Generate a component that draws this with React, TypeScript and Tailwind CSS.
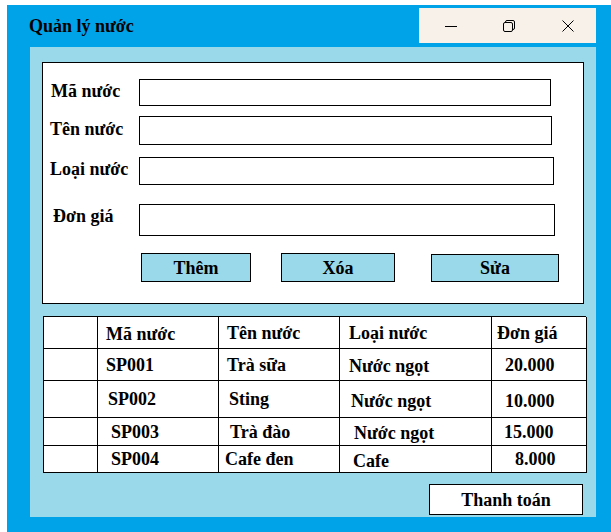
import React from "react";

const serif = { fontFamily: '"Liberation Serif", "Times New Roman", serif' };

function Field({ label, w, h, labelCls, rowCls }: { label: string; w: string; h: string; labelCls: string; rowCls: string }) {
  return (
    <div className={`flex items-center ${rowCls}`}>
      <div className={`w-[96px] shrink-0 text-[18px] leading-[20px] font-bold text-black whitespace-nowrap ${labelCls}`}>{label}</div>
      <div className={`bg-white border border-black ${w} ${h}`} />
    </div>
  );
}

export default function App() {
  const cell = "bg-white border-r border-b border-black flex items-center text-[18px] leading-[20px] font-bold text-black whitespace-nowrap";
  return (
    <div className="w-[611px] h-[532px] bg-white pl-[7px] pt-[5px] overflow-hidden" style={serif}>
      <div className="w-[604px] h-[527px] bg-[#00A2E8] flex flex-col">
        {/* Title bar */}
        <div className="h-[42px] flex items-start shrink-0">
          <div className="ml-[22px] mt-[10px] text-[18px] font-bold text-black leading-[22px]">Quản lý nước</div>
          <div className="ml-auto mr-[15px] mt-[3px] w-[177px] h-[35px] bg-[#F8F1EA] flex items-center">
            <svg className="ml-[26px]" width="12" height="12" viewBox="0 0 12 12">
              <path d="M0 6.5H12" stroke="#000" strokeWidth="1" />
            </svg>
            <svg className="ml-[46px]" width="12" height="12" viewBox="0 0 12 12">
              <rect x="0.5" y="2.5" width="9" height="9" rx="1.5" fill="none" stroke="#000" strokeWidth="1" />
              <path d="M2.5 2.5V2A1.5 1.5 0 0 1 4 0.5H10A1.5 1.5 0 0 1 11.5 2V8A1.5 1.5 0 0 1 10 9.5H9.5" fill="none" stroke="#000" strokeWidth="1" />
            </svg>
            <svg className="ml-[47px]" width="12" height="12" viewBox="0 0 12 12">
              <path d="M0.5 0.5L11.5 11.5M11.5 0.5L0.5 11.5" stroke="#000" strokeWidth="1" />
            </svg>
          </div>
        </div>
        {/* Content */}
        <div className="ml-[23px] w-[566px] h-[470px] bg-[#99D9EA] flex flex-col">
          <div className="ml-[12px] mt-[15px] w-[542px] h-[242px] bg-white border border-black flex flex-col">
            <Field label="Mã nước" w="w-[412px]" h="h-[27px]" rowCls="mt-[16px]" labelCls="pl-[8px] mb-[3px]" />
            <Field label="Tên nước" w="w-[413px]" h="h-[29px]" rowCls="mt-[10px]" labelCls="pl-[7px] mb-[4px]" />
            <Field label="Loại nước" w="w-[415px]" h="h-[28px]" rowCls="mt-[12px]" labelCls="pl-[7px] mb-[4px]" />
            <Field label="Đơn giá" w="w-[416px]" h="h-[32px]" rowCls="mt-[19px]" labelCls="pl-[10px] mb-[8px]" />
            <div className="flex mt-[17px]">
              <div className="ml-[98px] w-[110px] h-[29px] bg-[#99D9EA] border border-black flex items-center justify-center text-[18px] leading-[20px] font-bold">Thêm</div>
              <div className="ml-[30px] w-[114px] h-[29px] bg-[#99D9EA] border border-black flex items-center justify-center text-[18px] leading-[20px] font-bold">Xóa</div>
              <div className="ml-[36px] w-[128px] h-[28px] mt-[1px] bg-[#99D9EA] border border-black flex items-center justify-center text-[18px] leading-[20px] font-bold">Sửa</div>
            </div>
          </div>
          {/* Table */}
          <div className="ml-[13px] mt-[12px] w-[543px] border-l border-t border-black grid grid-cols-[54px_121px_121px_152px_95px] grid-rows-[32px_32px_37px_28px_27px]">
            <div className={cell} />
            <div className={`${cell} pl-[8px] pt-[2px]`}>Mã nước</div>
            <div className={`${cell} pl-[8px]`}>Tên nước</div>
            <div className={`${cell} pl-[9px]`}>Loại nước</div>
            <div className={`${cell} pl-[5px]`}>Đơn giá</div>

            <div className={cell} />
            <div className={`${cell} pl-[8px]`}>SP001</div>
            <div className={`${cell} pl-[8px]`}>Trà sữa</div>
            <div className={`${cell} pl-[9px] pt-[3px]`}>Nước ngọt</div>
            <div className={`${cell} pl-[13px]`}>20.000</div>

            <div className={cell} />
            <div className={`${cell} pl-[10px]`}>SP002</div>
            <div className={`${cell} pl-[10px]`}>Sting</div>
            <div className={`${cell} pl-[11px] pt-[4px]`}>Nước ngọt</div>
            <div className={`${cell} pl-[13px] pt-[4px]`}>10.000</div>

            <div className={cell} />
            <div className={`${cell} pl-[13px]`}>SP003</div>
            <div className={`${cell} pl-[11px]`}>Trà đào</div>
            <div className={`${cell} pl-[14px] pt-[3px]`}>Nước ngọt</div>
            <div className={`${cell} pl-[12px]`}>15.000</div>

            <div className={cell} />
            <div className={`${cell} pl-[13px]`}>SP004</div>
            <div className={`${cell} pl-[6px]`}>Cafe đen</div>
            <div className={`${cell} pl-[13px] pt-[3px]`}>Cafe</div>
            <div className={`${cell} pl-[23px]`}>8.000</div>
          </div>
          <div className="ml-[399px] mt-[11px] w-[154px] h-[31px] bg-white border border-black flex items-center justify-center text-[18px] leading-[20px] font-bold">Thanh toán</div>
        </div>
        <div className="flex-1" />
      </div>
    </div>
  );
}
